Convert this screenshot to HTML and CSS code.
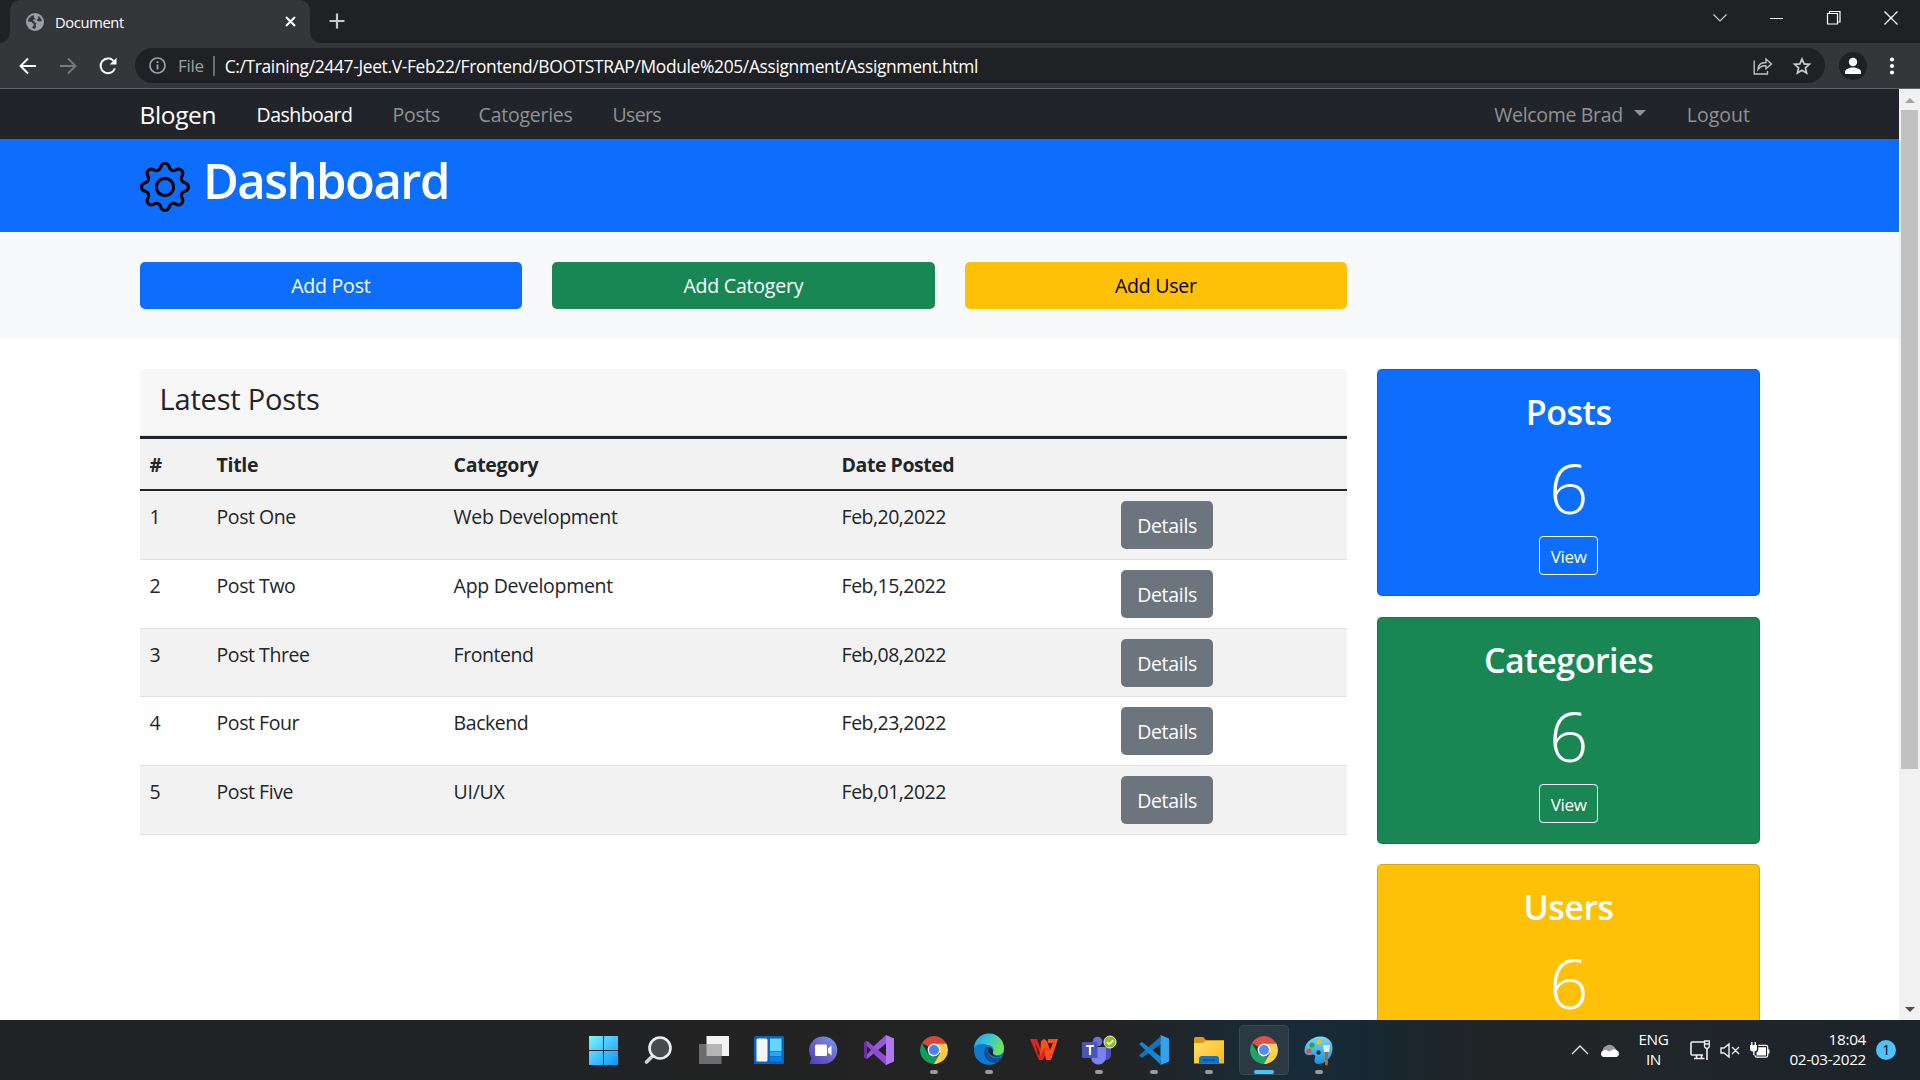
FILE: index.html
```html
<!DOCTYPE html>
<html lang="en">
<head>
<meta charset="utf-8">
<title>Document</title>
<link rel="stylesheet" href="styles.css">
</head>
<body>
<svg class="defs" width="0" height="0">
  <defs>
    <symbol id="chrome" viewBox="0 0 28 28">
      <path fill="#db4437" d="M14 14 1.900 7A14 14 0 0 1 26.100 7z"/>
      <path fill="#0f9d58" d="M14 14 14 28A14 14 0 0 1 1.900 7L8 17.500z"/>
      <path fill="#ffcd40" d="M14 7H26.100A14 14 0 0 1 14 28l6-10.500z"/>
      <path fill="#0f9d58" d="M8 17.500A7 7 0 0 0 20 17.500L14 28z"/>
      <path fill="#ffcd40" d="M20 17.500 14 28a14 14 0 0 0 3-.4z"/>
      <path fill="#db4437" d="M14 7H26.100V7.800H14z"/>
      <circle cx="14" cy="14" r="6.400" fill="#f1f1f1"/>
      <circle cx="14" cy="14" r="5" fill="#4285f4"/>
    </symbol>
  </defs>
</svg>
<header class="browser">
  <div class="tabstrip">
    <div class="tab">
      <svg class="globe" width="18" height="18" viewBox="0 0 18 18"><circle cx="9" cy="9" r="9" fill="#9aa0a6"/><path fill="#35363a" d="M8 2.200C4.500 2.600 2 5.500 2 8.600l3.500.4 2.200 2v2l-2 1.200c1 .9 2 1.500 3.300 1.600l1.200-2.300-.6-2.300 1.400-1.400H8.500V8H7.200V6.400h2.600L8 4.600zM12 3l.3 2.300L10.700 7l1.200 1.300h3.900C15.600 5.800 14 3.800 12 3z"/></svg>
      <span class="tab-title">Document</span>
      <svg class="tab-close" width="11" height="11" viewBox="0 0 11 11"><path d="M1 1l9 9M10 1l-9 9" stroke="#fff" stroke-width="2"/></svg>
    </div>
    <svg class="newtab" width="16" height="16" viewBox="0 0 16 16"><path d="M8 .5v15M.5 8h15" stroke="#c7c8ca" stroke-width="2.200"/></svg>
    <div class="winbtns">
      <svg width="14" height="8" viewBox="0 0 14 8"><path d="M.5.500l6.500 6.500L13.500.5" fill="none" stroke="#d0d0d0" stroke-width="1.100"/></svg>
      <svg width="14" height="14" viewBox="0 0 14 14"><path d="M0 7.500h13" stroke="#fff"/></svg>
      <svg width="14" height="14" viewBox="0 0 14 14"><path d="M.5 2.500h10v10.500H.5zM2.500 2.500V.500h10.500v10.500h-2" fill="none" stroke="#fff" stroke-width="1.200"/></svg>
      <svg width="14" height="14" viewBox="0 0 14 14"><path d="M.5.500l13 13M13.500.500l-13 13" stroke="#fff" stroke-width="1.300"/></svg>
    </div>
  </div>
  <div class="toolbar">
    <svg width="18" height="18" viewBox="0 0 18 18"><path d="M17 9H2M9 1.500L1.500 9 9 16.500" fill="none" stroke="#fff" stroke-width="1.900"/></svg>
    <svg width="18" height="18" viewBox="0 0 18 18"><path d="M1 9h15M9 1.500L16.500 9 9 16.500" fill="none" stroke="#77787b" stroke-width="1.900"/></svg>
    <svg width="18" height="18" viewBox="0 0 18 18"><path d="M14.500 3.800A7.400 7.400 0 1 0 15.900 11.500" fill="none" stroke="#fff" stroke-width="2"/><path fill="#fff" d="M17.500 .8V7.500h-6.800z"/></svg>
    <div class="omnibox">
      <svg width="17" height="17" viewBox="0 0 17 17"><circle cx="8.500" cy="8.500" r="7.500" fill="none" stroke="#9aa0a6" stroke-width="1.700"/><path d="M8.500 7.500v5M8.500 4.200v1.900" stroke="#9aa0a6" stroke-width="1.900"/></svg>
      <span class="scheme">File</span><i class="bar"></i>
      <span class="url">C:/Training/2447-Jeet.V-Feb22/Frontend/BOOTSTRAP/Module%205/Assignment/Assignment.html</span>
      <svg class="share" width="20" height="18" viewBox="0 0 20 18"><path d="M1.200 3.500V17h13.300v-3M5 12.500C5 8 8 5.500 13 5.500V2l5.500 5-5.500 4.800V8.800C9 8.500 7 9.500 5 12.500z" fill="none" stroke="#bfc1c4" stroke-width="1.400"/></svg>
      <svg width="18" height="18" viewBox="0 0 18 18"><path d="M9 2l2.100 4.900 5.300.4-4 3.500 1.200 5.200L9 13.200 4.400 16l1.200-5.200-4-3.500 5.300-.4z" fill="none" stroke="#c9cbce" stroke-width="1.700"/></svg>
    </div>
    <svg class="avatar" width="28" height="28" viewBox="0 0 28 28"><circle cx="14" cy="14" r="14" fill="#202124"/><circle cx="14" cy="10" r="4.200" fill="#fff"/><path fill="#fff" d="M6 22v-2c0-3 4.500-4.600 8-4.600s8 1.600 8 4.600v2z"/></svg>
    <svg class="kebab" width="6" height="18" viewBox="0 0 6 18"><g fill="#fff"><circle cx="3" cy="2.500" r="2.100"/><circle cx="3" cy="9" r="2.100"/><circle cx="3" cy="15.500" r="2.100"/></g></svg>
  </div>
</header>
<div class="viewport">
  <div class="page">
    <nav class="navbar">
      <span class="brand">Blogen</span>
      <span class="n1 on">Dashboard</span><span class="n2">Posts</span><span class="n3">Catogeries</span><span class="n4">Users</span>
      <span class="welcome">Welcome Brad<i class="caret"></i></span><span class="logout">Logout</span>
    </nav>
    <section class="hero">
      <svg width="50" height="50" viewBox="0 0 16 16"><path d="M8 4.754a3.246 3.246 0 1 0 0 6.492 3.246 3.246 0 0 0 0-6.492zM5.754 8a2.246 2.246 0 1 1 4.492 0 2.246 2.246 0 0 1-4.492 0z"/><path d="M9.796 1.343c-.527-1.790-3.065-1.790-3.592 0l-.094.319a.873.873 0 0 1-1.255.52l-.292-.16c-1.640-.892-3.433.902-2.540 2.541l.159.292a.873.873 0 0 1-.52 1.255l-.319.094c-1.790.527-1.790 3.065 0 3.592l.319.094a.873.873 0 0 1 .52 1.255l-.16.292c-.892 1.640.901 3.434 2.541 2.540l.292-.159a.873.873 0 0 1 1.255.52l.094.319c.527 1.790 3.065 1.790 3.592 0l.094-.319a.873.873 0 0 1 1.255-.52l.292.16c1.640.893 3.434-.902 2.540-2.541l-.159-.292a.873.873 0 0 1 .52-1.255l.319-.094c1.790-.527 1.790-3.065 0-3.592l-.319-.094a.873.873 0 0 1-.52-1.255l.16-.292c.893-1.640-.902-3.433-2.541-2.540l-.292.159a.873.873 0 0 1-1.255-.52l-.094-.319zm-2.633.283c.246-.835 1.428-.835 1.674 0l.094.319a1.873 1.873 0 0 0 2.693 1.115l.291-.16c.764-.415 1.600.42 1.184 1.185l-.159.292a1.873 1.873 0 0 0 1.116 2.692l.318.094c.835.246.835 1.428 0 1.674l-.319.094a1.873 1.873 0 0 0-1.115 2.693l.16.291c.415.764-.42 1.600-1.185 1.184l-.291-.159a1.873 1.873 0 0 0-2.693 1.116l-.094.318c-.246.835-1.428.835-1.674 0l-.094-.319a1.873 1.873 0 0 0-2.692-1.115l-.292.16c-.764.415-1.600-.42-1.184-1.185l.159-.291A1.873 1.873 0 0 0 1.945 8.930l-.319-.094c-.835-.246-.835-1.428 0-1.674l.319-.094A1.873 1.873 0 0 0 3.060 4.377l-.16-.292c-.415-.764.42-1.600 1.185-1.184l.292.159a1.873 1.873 0 0 0 2.692-1.115l.094-.319z"/></svg>
      <h1>Dashboard</h1>
    </section>
    <section class="actions">
      <a class="blue">Add Post</a><a class="green">Add Catogery</a><a class="yellow">Add User</a>
    </section>
    <main class="content">
      <div class="posts">
        <h4>Latest Posts</h4>
        <table>
          <thead><tr><th class="c1">#</th><th class="c2">Title</th><th class="c3">Category</th><th class="c4">Date Posted</th><th></th></tr></thead>
          <tbody>
            <tr><td>1</td><td>Post One</td><td class="cat">Web Development</td><td class="date">Feb,20,2022</td><td><a class="details">Details</a></td></tr>
            <tr><td>2</td><td>Post Two</td><td class="cat">App Development</td><td class="date">Feb,15,2022</td><td><a class="details">Details</a></td></tr>
            <tr><td>3</td><td>Post Three</td><td>Frontend</td><td class="date">Feb,08,2022</td><td><a class="details">Details</a></td></tr>
            <tr><td>4</td><td>Post Four</td><td>Backend</td><td class="date">Feb,23,2022</td><td><a class="details">Details</a></td></tr>
            <tr><td>5</td><td>Post Five</td><td class="cat">UI/UX</td><td class="date">Feb,01,2022</td><td><a class="details">Details</a></td></tr>
          </tbody>
        </table>
      </div>
      <aside class="stats">
        <div class="stat blue"><h3>Posts</h3><p>6</p><a>View</a></div>
        <div class="stat green"><h3>Categories</h3><p>6</p><a>View</a></div>
        <div class="stat yellow light"><h3>Users</h3><p>6</p></div>
      </aside>
    </main>
  </div>
  <div class="scrollbar">
    <i class="up"></i><i class="thumb"></i><i class="down"></i>
  </div>
</div>
<footer class="taskbar">
  <div class="apps">
    <div class="app"><svg width="29" height="29" viewBox="0 0 29 29"><defs><linearGradient id="w" gradientUnits="userSpaceOnUse" x1="0" y1="0" x2="29" y2="29"><stop offset="0" stop-color="#7df3ff"/><stop offset="1" stop-color="#0a95ff"/></linearGradient></defs><path fill="url(#w)" d="M0 0h14v14H0zM15 0h14v14H15zM0 15h14v14H0zM15 15h14v14H15z"/></svg></div>
    <div class="app"><svg width="30" height="29" viewBox="0 0 30 29"><path d="M8.500 20L2.500 26" stroke="#cfd3d5" stroke-width="3.600" stroke-linecap="round"/><circle cx="16" cy="12" r="10.500" fill="#4a4b4c" stroke="#eceeef" stroke-width="2.600"/></svg></div>
    <div class="app"><svg width="30" height="28" viewBox="0 0 30 28"><path fill="#f3f3f3" d="M7.500 0H30v20H7.500z"/><path fill="#6b6c6d" d="M0 8h22.500v20H0z"/><path fill="#b5b5b5" d="M7.500 8h15v12h-15z"/></svg></div>
    <div class="app"><svg width="30" height="28" viewBox="0 0 30 28"><rect width="30" height="28" rx="1.500" fill="#0f65b5"/><rect x="2.500" y="2.500" width="11" height="23" rx="1.500" fill="#f6f6f6"/><path fill="#65d7ff" d="M16 2.500h11.500V15H16z"/><path fill="#2aa5fb" d="M16 15.500h11.500v4.500H16z"/><path fill="#0a7fe8" d="M16 20.500h11.500v5H16z"/></svg></div>
    <div class="app"><svg width="29" height="29" viewBox="0 0 29 29"><defs><linearGradient id="c" x1="0" y1="1" x2="1" y2="0"><stop offset="0" stop-color="#4c3fb8"/><stop offset=".5" stop-color="#6f63c9"/><stop offset="1" stop-color="#6fa0f2"/></linearGradient></defs><path fill="url(#c)" d="M14.500 .5a13.800 13.800 0 0 1 0 27.600H.5L2.500 22A13.800 13.800 0 0 1 14.500 .500z"/><rect x="6" y="8.500" width="12" height="11.500" rx="1.500" fill="#fff"/><path fill="#fff" d="M19 12.500l3.500-3v10l-3.500-3z"/></svg></div>
    <div class="app"><svg width="30" height="30" viewBox="0 0 30 30"><path fill="#7e3abf" d="M0 7.500L3 6l5.500 5L22 21.500V30L0 10z"/><path fill="#9b56d9" d="M22 0v8.500L3 24 0 22.500V20z"/><path fill="#8f4bd0" d="M3 6l19 15.500V30L0 10V7.500z"/><path fill="#6a2ca8" d="M0 7.500L3 6v18l-3-1.500z"/><path fill="#222325" d="M3 11l4 4-4 4.500z"/><path fill="#b179f1" d="M22 0l8 3.500v23L22 30z"/></svg></div>
    <div class="app run"><svg width="28" height="28"><use href="#chrome"/></svg></div>
    <div class="app run"><svg width="30" height="30" viewBox="0 0 30 30"><defs><linearGradient id="e" x1="0" y1="0" x2="1" y2=".4"><stop offset="0" stop-color="#1f9be8"/><stop offset=".5" stop-color="#36c5d6"/><stop offset="1" stop-color="#6be45c"/></linearGradient></defs><circle cx="15" cy="15" r="15" fill="#0f78d0"/><path fill="url(#e)" d="M0 13A15 15 0 0 1 30 14c0 4-3.500 6-6.500 6-4 0-5-2-4.500-3 2-3-1-7-5-7C8 8 2 9 0 13z"/><path fill="#134d96" d="M12 12c-5 8 1 16 10 16 3-1 5-4 6-6-7 3-14 0-14-6 0-2 1-3 2-4z"/><path fill="#1b242b" d="M16.500 12.500c-2.500.5-3 3-1.500 5.500 2 3 6 4 9 3.600 2.500-.3 4.500-1.600 6-3.600h1v6l-3-1.500 1-3c-1.500 1-3.500 1.500-5.500 1.500-4 0-5-2-4.500-3 .6-2-.6-4.800-2.500-5.500z"/></svg></div>
    <div class="app"><svg width="28" height="22" viewBox="0 0 28 22"><path fill="#e3211b" d="M0 0h7l4 11 4-7 3 6-5 11H9z"/><path fill="#ff4b1d" d="M11 2l3-2 3 2 3 9 3-7h-5V0h10l-7 21h-5L14 9l-4 9z"/><path fill="#231f20" d="M5 3.500l4.500 11-1 2z"/></svg></div>
    <div class="app run"><svg width="34" height="28" viewBox="0 0 34 28"><circle cx="15.500" cy="5.500" r="4.800" fill="#6a70d6"/><path fill="#4a50bd" d="M22 11h7v9a5 5 0 0 1-6 4z"/><path fill="#7b83eb" d="M9 11h15v9a7.500 7.500 0 0 1-15 2z"/><rect y="6" width="15.500" height="16" rx="1" fill="#4b53bc"/><path d="M4 10h8M8 10v9" stroke="#fff" stroke-width="2.200"/><circle cx="28" cy="6" r="6" fill="#8cc210" stroke="#eee" stroke-width="1"/><path d="M25 6l2.200 2.300 4-4" fill="none" stroke="#fff" stroke-width="1.700"/></svg></div>
    <div class="app run"><svg width="30" height="30" viewBox="0 0 30 30"><path fill="#1273ba" d="M0 20.500L21 2l1 7L3 23z"/><path fill="#1487d4" d="M0 9l3-2 19 15-1 7z"/><path fill="#30a3f0" d="M21.500 0L30 3.500v23L21.500 30z"/></svg></div>
    <div class="app run"><svg width="30" height="27" viewBox="0 0 30 27"><defs><linearGradient id="f" x1="0" y1="0" x2="1" y2="1"><stop offset="0" stop-color="#ffdf70"/><stop offset="1" stop-color="#fbb90f"/></linearGradient></defs><path fill="#e09a09" d="M0 1.500Q0 0 1.500 0H9l3 3h18v5H0z"/><path fill="url(#f)" d="M0 6h9l3-2h18v22.500H0z"/><path fill="#0f73c9" d="M5 26.500V22q0-3 3-3h14q3 0 3 3v4.500z"/><path fill="#0a4f96" d="M9 22.200h12v1.500H9z"/></svg></div>
    <div class="app run active"><svg width="28" height="28"><use href="#chrome"/></svg></div>
    <div class="app run"><svg width="29" height="29" viewBox="0 0 29 29"><defs><linearGradient id="p" x1="0" y1="0" x2="0" y2="1"><stop offset="0" stop-color="#6fdcf8"/><stop offset="1" stop-color="#1e8fe0"/></linearGradient></defs><path fill="url(#p)" d="M16 .5C24 0 29 6 28.500 13c-.5 9-8 15-14.500 15-4 0-4-4-3-6 1-3-1-4-3-3.500-3 1-7.500 1-7.500-4C.5 7 8 .500 16 .500z"/><circle cx="5" cy="15" r="2.600" fill="#e2582c"/><circle cx="8" cy="9" r="2.600" fill="#37a343"/><circle cx="15" cy="6" r="2.500" fill="#fcb913"/><circle cx="14.500" cy="16.500" r="2.200" fill="#17303c"/><path fill="#ede6dc" d="M19 9h7l-1 7h-5z"/><path fill="#b5651d" d="M21 16h3v12a1.500 1.500 0 0 1-3 0z"/></svg></div>
  </div>
  <div class="tray">
    <svg class="chev" width="18" height="10" viewBox="0 0 18 10"><path d="M1 9l8-8 8 8" fill="none" stroke="#eee" stroke-width="1.300"/></svg>
    <svg class="cloud" width="20" height="13" viewBox="0 0 20 13"><path fill="#9a9a9a" d="M3 8a5 5 0 0 1 3-6 6 6 0 0 1 9 2l3 4z"/><path fill="#fff" d="M3.500 13A3.500 3.500 0 0 1 4 6.200Q6 5.500 9 7.500l4-2q2-1 4 1a3.500 3.500 0 0 1-.5 6.500z"/></svg>
    <span class="lang">ENG<br>IN</span>
    <svg class="net" width="20" height="20" viewBox="0 0 20 20"><path d="M14 2H2Q1 2 1 3v11q0 1 1 1h11M4 18.500h10.500M6.500 15v3M11.500 15v3M17 9v11" fill="none" stroke="#eee" stroke-width="1.600"/><path d="M14.500 1h4.800v5q0 2-2.400 2.500-2.400-.5-2.400-2.500zM14.500 4h5" fill="none" stroke="#eee" stroke-width="1.300"/></svg>
    <svg class="vol" width="20" height="15" viewBox="0 0 20 15"><path d="M1 5h3l5-4v13l-5-4H1zM12 4l7 7M19 4l-7 7" fill="none" stroke="#eee" stroke-width="1.400"/></svg>
    <svg class="bat" width="20" height="17" viewBox="0 0 20 17"><path fill="#fff" d="M0 3h7v4q0 2-2.500 2.500V13h-1.400V9.500Q0 9 0 7zM1.200 0h1.300v4H1.200zM4.600 0h1.300v4H4.600z"/><path fill="#fff" d="M8.300 5.200H16v8.300H6.500V10.500q1.800-1 1.800-3z"/><path d="M8.300 3.300H16q1.700 0 1.700 1.700v8.500q0 1.700-1.700 1.700H7q-2 0-2.300-2M18.800 7.500v4" fill="none" stroke="#fff" stroke-width="1.200"/></svg>
    <span class="clock">18:04<br>02-03-2022</span>
    <span class="badge">1</span>
  </div>
</footer>
</body>
</html>
```
FILE: styles.css
```css
* { box-sizing: border-box; }
body {
  margin: 0;
  width: 1920px;
  height: 1080px;
  overflow: hidden;
  display: flex;
  flex-direction: column;
  font-family: "Open Sans", "Noto Sans", sans-serif;
  font-size: 19.5px;
  letter-spacing: -0.32px;
  color: #212529;
}
svg { display: block; flex: none; overflow: visible; }
.defs { height: 0; }
span, a, h1, h3, h4 { white-space: nowrap; }

/* browser chrome */
.browser { flex: none; height: 89px; background: #35363a; border-bottom: 1px solid #5f6063; }
.tabstrip { height: 43px; background: #202124; display: flex; align-items: flex-start; }
.tab {
  position: relative;
  width: 300px; height: 43px; margin-left: 10px; padding: 0 14px 0 16px;
  background: #35363a; border-radius: 10px 10px 0 0;
  display: flex; align-items: center;
}
.tab::before, .tab::after {
  content: ""; position: absolute; bottom: 0; width: 10px; height: 10px;
}
.tab::before { left: -10px; background: radial-gradient(circle at 0 0, #202124 9.5px, #35363a 10px); }
.tab::after { right: -10px; background: radial-gradient(circle at 100% 0, #202124 9.5px, #35363a 10px); }
.tab-title { margin-left: 11px; flex: 1; font-size: 14.7px; letter-spacing: -0.35px; color: #fff; line-height: 42px; }
.newtab { margin: 13px 0 0 19px; }
.winbtns { margin-left: auto; display: flex; align-items: center; gap: 43px; padding: 11px 22px 0 0; }
.toolbar { height: 45px; display: flex; align-items: center; padding-left: 19px; gap: 22px; }
.omnibox {
  width: 1690px; height: 35px; margin-left: -4px; padding: 0 14px 0 14px;
  border-radius: 18px; background: #202124;
  display: flex; align-items: center;
}
.scheme { margin-left: 12px; font-size: 17px; color: #9aa0a6; }
.bar { width: 2px; height: 20px; margin: 0 10px 0 9px; background: #6b6d70; }
.url { flex: 1; font-size: 17.4px; letter-spacing: -0.34px; color: #fff; }
.share { margin-right: 20px; }
.avatar { margin-left: -8px; }

/* page */
.viewport { height: 931px; flex: none; display: flex; overflow: hidden; }
.page { width: 1899px; height: 931px; overflow: hidden; background: #fff; }
.navbar {
  height: 50px; padding: 0 149px 0 139.600px; background: #212529; color: #909294;
  display: flex; line-height: 51px;
}
.brand { width: 117px; font-size: 24.5px; letter-spacing: -0.4px; color: #fff; }
.on { color: #fff; letter-spacing: -0.55px; }
.n1 { width: 136px; }
.n2 { width: 86px; }
.n3 { width: 134px; letter-spacing: -0.25px; }
.n4 { letter-spacing: -0.7px; }
.logout { letter-spacing: 0; }
.welcome { margin-left: auto; display: flex; align-items: center; }
.caret { margin: 0 41px 3px 11px; border: 6px solid transparent; border-top-color: #909294; border-bottom: 0; }
.hero { height: 93px; background: #0d6efd; display: flex; padding: 23px 0 0 140px; }
h1 { margin: -16px 0 0 13px; font-size: 49px; font-weight: 600; letter-spacing: -1.55px; line-height: 68px; color: #fff; }
.actions { height: 107px; background: #f8f9fa; padding: 30px 0 0 139.600px; display: flex; gap: 30px; }
.actions a { width: 382.500px; height: 47px; border-radius: 5px; text-align: center; line-height: 48px; letter-spacing: -0.22px; }
.blue { background: #0d6efd; color: #fff; }
.green { background: #198754; color: #fff; }
.yellow { background: #ffc107; color: #000; }
.content { padding: 30px 0 0 139.600px; display: flex; gap: 30px; align-items: flex-start; }
.posts { width: 1207.500px; }
h4 {
  margin: 0; height: 67px; padding: 0 20px; border-radius: 5px 5px 0 0;
  background: #f7f7f7; border-bottom: 1px solid #dfdfdf;
  font-size: 29px; font-weight: 500; letter-spacing: -0.2px; line-height: 59px;
}
table { width: 100%; border-collapse: separate; border-spacing: 0; table-layout: fixed; border-top: 3px solid #212529; }
th { height: 52px; padding: 2px 10px 0; text-align: left; background: #f2f2f2; border-bottom: 2px solid #212529; line-height: 48px; }
.c1 { width: 67px; }
.c2 { width: 237px; }
.c3 { width: 388px; }
.c4 { width: 279.500px; letter-spacing: -0.45px; }
td { height: 68.800px; padding: 10px 10px 0; vertical-align: top; border-bottom: 1px solid #dee2e6; line-height: 31px; letter-spacing: -0.45px; }
tbody tr:nth-child(odd) td { background: #f2f2f2; }
.cat { letter-spacing: -0.28px; }
.date { letter-spacing: -0.52px; }
.details { display: block; width: 92px; height: 48px; border-radius: 5px; background: #6c757d; color: #fff; text-align: center; line-height: 50px; letter-spacing: -0.3px; }
.stats { display: flex; flex-direction: column; gap: 20.500px; }
.stat { width: 383px; height: 227px; border: 1px solid rgba(0,0,0,.125); border-radius: 5px; text-align: center; }
.light { color: #fff; }
h3 { margin: 20px 0 0; font-size: 34px; font-weight: 600; letter-spacing: -0.5px; line-height: 44px; }
.stat p { margin: 11px 0 0; font-size: 69px; font-weight: 300; line-height: 84px; }
.stat a { display: block; width: 59px; height: 39px; margin: 7px auto 0; border: 1px solid #fff; border-radius: 4px; font-size: 17px; line-height: 39px; }
.scrollbar { width: 21px; background: #f1f1f1; display: flex; flex-direction: column; align-items: center; }
.up { margin: 9px 0 7px; border: 5px solid transparent; border-bottom-color: #a3a3a3; border-top: 0; }
.thumb { width: 17px; height: 659px; background: #c1c1c1; }
.down { margin: auto 0 8px; border: 5px solid transparent; border-top-color: #505050; border-bottom: 0; }

/* taskbar */
.taskbar { height: 60px; display: flex; background: linear-gradient(90deg, #202224 0, #232323 55%, #242323 58%, #1c2830 63%, #172b38 68%, #182833 71%, #222526 78%, #20262a 88%, #1b242b 100%); color: #fff; }
.apps { display: flex; margin-left: 576px; }
.app { position: relative; width: 55px; height: 60px; display: flex; align-items: center; justify-content: center; }
.app.run::after { content: ""; position: absolute; bottom: 6px; left: 24px; width: 8px; height: 4px; border-radius: 2px; background: #9a9b9c; }
.active::before { content: ""; position: absolute; inset: 5px 2px 5px 3px; border-radius: 5px; background: rgba(255,255,255,.08); border: 1px solid rgba(255,255,255,.08); }
.app.active::after { left: 18px; width: 20px; background: #4cc2ff; }
.tray { margin: 0 24px 0 auto; display: flex; align-items: center; font-size: 15px; line-height: 20px; }
.cloud { margin-left: 11px; }
.lang { margin-left: 18px; text-align: center; font-size: 15.3px; letter-spacing: -0.4px; margin-top: -2px; }
.net { margin-left: 22px; }
.vol { margin-left: 10px; }
.bat { margin-left: 10px; }
.clock { margin-left: 19px; text-align: right; margin-top: -2px; font-size: 15.3px; }
.badge { margin-left: 10px; width: 20px; height: 20px; border-radius: 50%; background: #4cc2ff; color: #000; text-align: center; font-size: 14px; }
```
